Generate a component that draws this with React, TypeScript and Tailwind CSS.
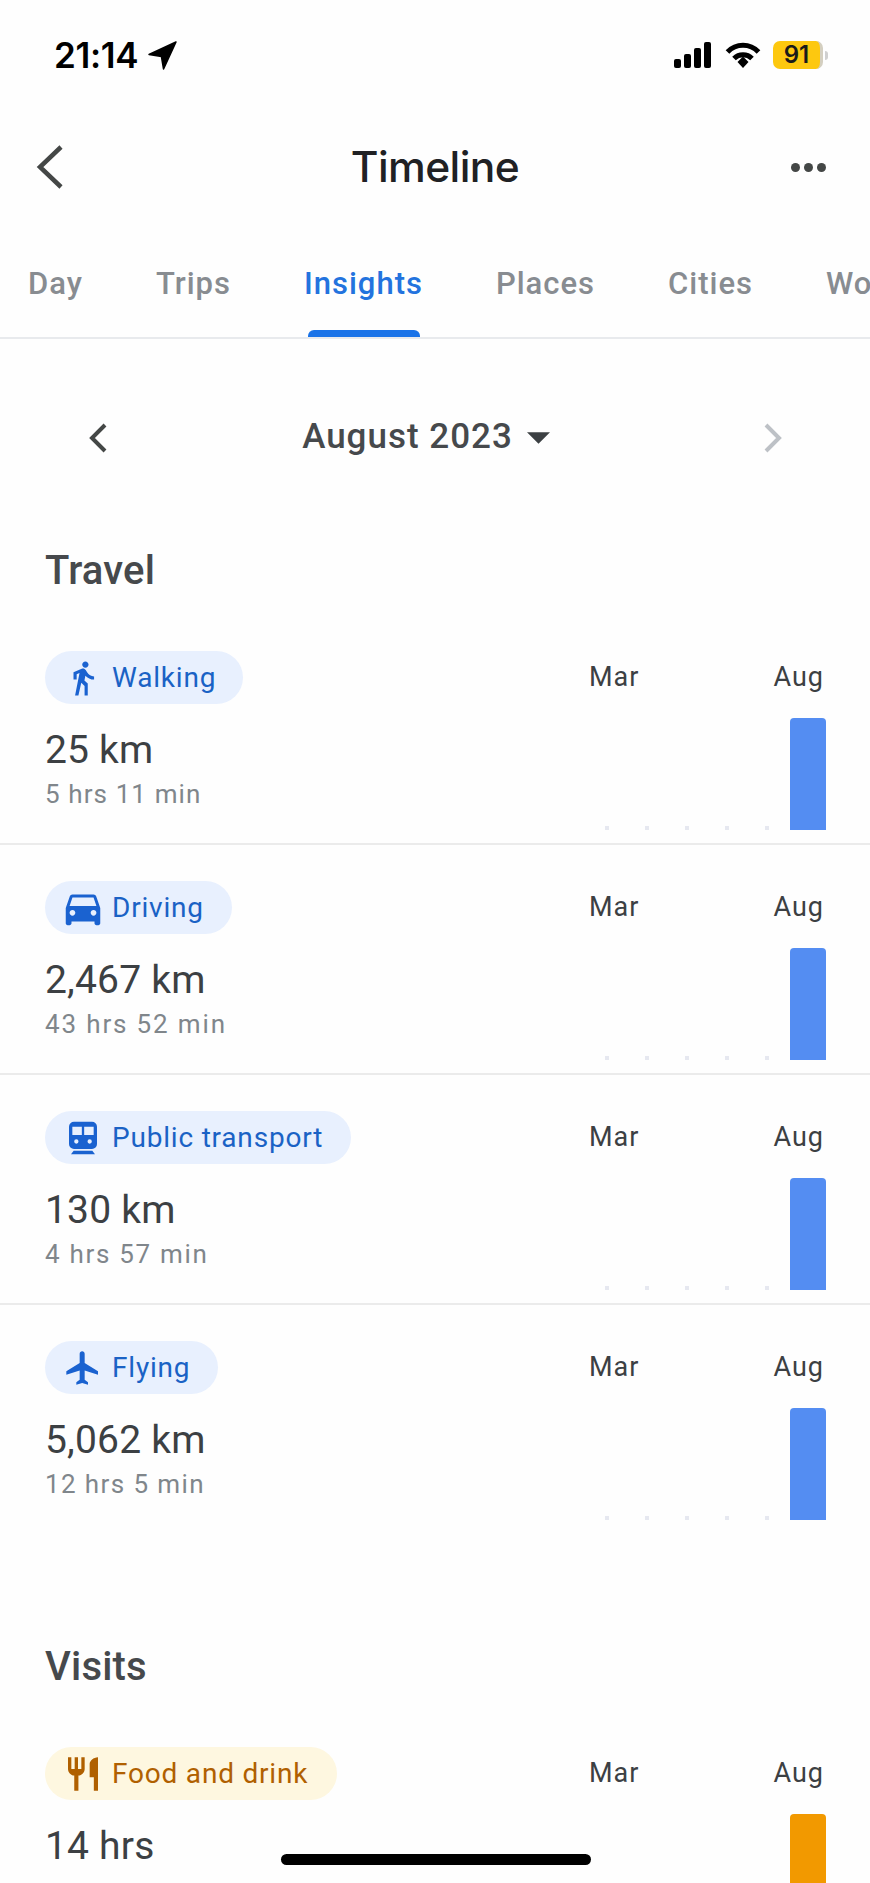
import React from "react";

const walk = "M13.5 5.5c1.1 0 2-.9 2-2s-.9-2-2-2-2 .9-2 2 .9 2 2 2zM9.8 8.9L7 23h2.1l1.8-8 2.1 2v6h2v-7.5l-2.1-2 .6-3C14.8 12 16.8 13 19 13v-2c-1.9 0-3.5-1-4.3-2.4l-1-1.6c-.4-.6-1-1-1.7-1-.3 0-.5.1-.8.1L6 8.3V13h2V9.6l1.8-.7";
const car = "M18.92 6.01C18.72 5.42 18.16 5 17.5 5h-11c-.66 0-1.21.42-1.42 1.01L3 12v8c0 .55.45 1 1 1h1c.55 0 1-.45 1-1v-1h12v1c0 .55.45 1 1 1h1c.55 0 1-.45 1-1v-8l-2.08-5.99zM6.5 16c-.83 0-1.5-.67-1.5-1.5S5.67 13 6.5 13s1.5.67 1.5 1.5S7.33 16 6.5 16zm11 0c-.83 0-1.5-.67-1.5-1.5s.67-1.5 1.5-1.5 1.5.67 1.5 1.5-.67 1.5-1.5 1.5zM5 11l1.5-4.5h11L19 11H5z";
const train = "M6.6 2.2h10.8a3 3 0 0 1 3 3v10.4a3 3 0 0 1-3 3H6.6a3 3 0 0 1-3-3V5.2a3 3 0 0 1 3-3zM5.6 5.2v5h5.7v-5zM12.7 5.2v5h5.7v-5zM8 12.8a1.3 1.3 0 1 0 0 2.6a1.3 1.3 0 1 0 0-2.6zM16 12.8a1.3 1.3 0 1 0 0 2.6a1.3 1.3 0 1 0 0-2.6zM6.4 19.6h11.2l1.6 2.2H4.8z";
const plane = "M21 16v-2l-8-5V3.5c0-.83-.67-1.5-1.5-1.5S10 2.67 10 3.5V9l-8 5v2l8-2.5V19l-2 1.5V22l3.5-1 3.5 1v-1.5L13 19v-5.5l8 2.5z";
const food = "M11 9H9V2H7v7H5V2H3v7c0 2.12 1.66 3.84 3.75 3.97V22h2.5v-9.03C11.34 12.84 13 11.12 13 9V2h-2v7zm5-3v8h2.5v8H21V2c-2.76 0-5 2.24-5 4z";

type RowProps = {
  icon: string;
  label: string;
  value: string;
  sub?: string;
  subClass?: string;
  pillClass: string;
  textClass: string;
  barClass: string;
  iconClass: string;
  pillWidth: string;
  divider?: boolean;
};

function Row({ icon, label, value, sub, subClass, pillClass, textClass, barClass, iconClass, pillWidth, divider }: RowProps) {
  return (
    <div className={`flex h-[194px] shrink-0 justify-between pl-[45px] pr-[44px] ${divider ? "border-b-2 border-[#ebebeb]" : ""}`}>
      <div className="flex flex-col">
        <div className={`flex h-[53px] items-center rounded-full ${pillWidth} ${pillClass}`}>
          <svg viewBox="0 0 24 24" fillRule="evenodd" className={`shrink-0 fill-current ${iconClass}`}>
            <path d={icon} />
          </svg>
          <span className={`ml-[9px] text-[28px] tracking-[0.8px] whitespace-nowrap ${textClass}`}>{label}</span>
        </div>
        <div className="mt-[21px] text-[39px] leading-[50px] tracking-[0.2px] text-[#3c4043]">{value}</div>
        {sub && <div className={`mt-[3px] text-[26px] leading-[32px] text-[#80868b] ${subClass}`}>{sub}</div>}
      </div>
      <div className="flex w-[237px] flex-col">
        <div className="flex h-[53px] items-center justify-between pr-[2px] text-[27px] tracking-[1px] text-[#3c4043]">
          <span>Mar</span>
          <span>Aug</span>
        </div>
        <div className="mt-[14px] flex h-[112px] items-end">
          <div className="ml-[16px] flex gap-[36px]">
            {[0, 1, 2, 3, 4].map((i) => (
              <span key={i} className="h-[4px] w-[4px] bg-[#e6e8f0]" />
            ))}
          </div>
          <div className={`ml-auto h-[112px] w-[36px] rounded-t-[4px] ${barClass}`} />
        </div>
      </div>
    </div>
  );
}

const tabs = ["Day", "Trips", "Insights", "Places", "Cities", "World"];
const blue = { pillClass: "bg-[#e8f0fe]", textClass: "text-[#1a62c5]", barClass: "bg-[#548df2]" };

export default function App() {
  return (
    <div className="relative flex h-[1883px] w-[870px] flex-col overflow-hidden bg-[#fefefe] font-['Roboto',sans-serif]">
      {/* status bar */}
      <div className="flex h-[110px] shrink-0 items-center justify-between pl-[54px] pr-[42px]">
        <div className="flex items-center gap-[10px]">
          <span className="font-['Inter',sans-serif] text-[35px] font-semibold tracking-[-0.3px] text-black">21:14</span>
          <svg viewBox="0 0 28 28" className="h-[29px] w-[29px] fill-black">
            <path d="M27 1 L1 13 L13 15 L15 27 Z" stroke="black" strokeWidth="1.5" strokeLinejoin="round" />
          </svg>
        </div>
        <div className="flex items-center">
          <svg viewBox="0 0 38 26" className="h-[26px] w-[38px] fill-black">
            <rect x="0" y="17" width="7" height="9" rx="2" />
            <rect x="10" y="12" width="7" height="14" rx="2" />
            <rect x="20" y="6" width="7" height="20" rx="2" />
            <rect x="30" y="0" width="7" height="26" rx="2" />
          </svg>
          <svg viewBox="0 0 36 26" className="ml-[13px] h-[26px] w-[36px] fill-none stroke-black">
            <path d="M2.5 10 C11 1 25 1 33.5 10" strokeWidth="5" />
            <path d="M9 16.5 C14 11.5 22 11.5 27 16.5" strokeWidth="5" />
            <path d="M12.5 20 L18 14.5 L23.5 20 L18 26 Z" fill="black" stroke="none" />
          </svg>
          <div className="ml-[12px] flex h-[28px] w-[50px] items-center justify-center overflow-hidden rounded-[7px] border-r-[3px] border-[#d4cfc0] bg-[#fdc80f] font-['Inter',sans-serif] text-[24px] font-semibold text-[#1a1a1a]">
            91
          </div>
          <div className="ml-[2px] h-[9px] w-[3px] rounded-r-full bg-[#d0d0d0]" />
        </div>
      </div>

      {/* title bar */}
      <div className="flex h-[114px] shrink-0 items-center pl-[36px] pr-[44px]">
        <div className="w-[68px] shrink-0">
          <svg viewBox="0 0 28 44" className="h-[44px] w-[28px] fill-none stroke-[#444746]">
            <path d="M25 2 L4 22 L25 42" strokeWidth="4.5" />
          </svg>
        </div>
        <span className="flex-1 text-center font-['Inter',sans-serif] text-[42.5px] font-medium tracking-[-0.6px] text-[#202124]">Timeline</span>
        <div className="flex w-[60px] shrink-0 justify-end gap-[4px]">
          <span className="h-[9px] w-[9px] rounded-full bg-[#444746]" />
          <span className="h-[9px] w-[9px] rounded-full bg-[#444746]" />
          <span className="h-[9px] w-[9px] rounded-full bg-[#444746]" />
        </div>
      </div>

      {/* tabs */}
      <div className="flex h-[115px] shrink-0 gap-[73px] overflow-hidden border-b-2 border-[#e8eaed] pl-[28px]">
        {tabs.map((t) => (
          <div key={t} className="relative flex h-[113px] shrink-0 items-center pt-[7px]">
            <span className={`text-[31px] font-medium tracking-[1px] ${t === "Insights" ? "text-[#2373de]" : "text-[#888c91]"}`}>{t}</span>
            {t === "Insights" && <span className="absolute bottom-0 left-[4px] h-[7px] w-[112px] rounded-t-[6px] bg-[#1a73e8]" />}
          </div>
        ))}
      </div>

      {/* month selector */}
      <div className="flex h-[197px] shrink-0 items-center justify-between pl-[88px] pr-[87px]">
        <svg viewBox="0 0 20 32" className="h-[32px] w-[20px] fill-none stroke-[#444746]">
          <path d="M17 3 L4 16 L17 29" strokeWidth="4" />
        </svg>
        <div className="mr-[19px] flex items-center gap-[14px]">
          <span className="text-[35px] font-medium tracking-[1px] text-[#46494c]">August 2023</span>
          <svg viewBox="0 0 24 12" className="h-[12px] w-[23px] fill-[#3c4043]">
            <path d="M0 0 H24 L12 12 Z" />
          </svg>
        </div>
        <svg viewBox="0 0 20 32" className="h-[32px] w-[20px] fill-none stroke-[#bdc1c6]">
          <path d="M3 3 L16 16 L3 29" strokeWidth="4" />
        </svg>
      </div>

      <div className="flex flex-col">
        <h2 className="mt-[10px] h-[105px] shrink-0 pl-[45px] text-[40px] leading-[50px] font-medium tracking-[0.2px] text-[#46494c]">Travel</h2>
        <Row divider icon={walk} label="Walking" value="25 km" sub="5 hrs 11 min" subClass="tracking-[1.1px]" pillWidth="w-[198px]" iconClass="ml-[19px] mr-px h-[38px] w-[38px] text-[#1a62d0]" {...blue} />
        <div className="h-[36px] shrink-0" />
        <Row divider icon={car} label="Driving" value="2,467 km" sub="43 hrs 52 min" subClass="tracking-[1.85px]" pillWidth="w-[187px]" iconClass="ml-[15px] -mr-[3px] h-[46px] w-[46px] text-[#1a62d0]" {...blue} />
        <div className="h-[36px] shrink-0" />
        <Row divider icon={train} label="Public transport" value="130 km" sub="4 hrs 57 min" subClass="tracking-[1.7px]" pillWidth="w-[306px]" iconClass="ml-[18px] h-[40px] w-[40px] text-[#1a62d0]" {...blue} />
        <div className="h-[36px] shrink-0" />
        <Row icon={plane} label="Flying" value="5,062 km" sub="12 hrs 5 min" subClass="tracking-[1.4px]" pillWidth="w-[173px]" iconClass="ml-[18px] h-[40px] w-[40px] text-[#1a62d0]" {...blue} />
        <h2 className="mt-[107px] h-[105px] shrink-0 pl-[45px] text-[40px] leading-[50px] font-medium tracking-[0.2px] text-[#46494c]">Visits</h2>
        <Row icon={food} label="Food and drink" value="14 hrs" pillWidth="w-[292px]" pillClass="bg-[#fef7e0]" textClass="text-[#b06000]" iconClass="ml-[18px] h-[40px] w-[40px] text-[#b06000]" barClass="bg-[#f29900]" />
      </div>

      <div className="absolute top-[1854px] left-[281px] h-[11px] w-[310px] rounded-full bg-black" />
    </div>
  );
}
